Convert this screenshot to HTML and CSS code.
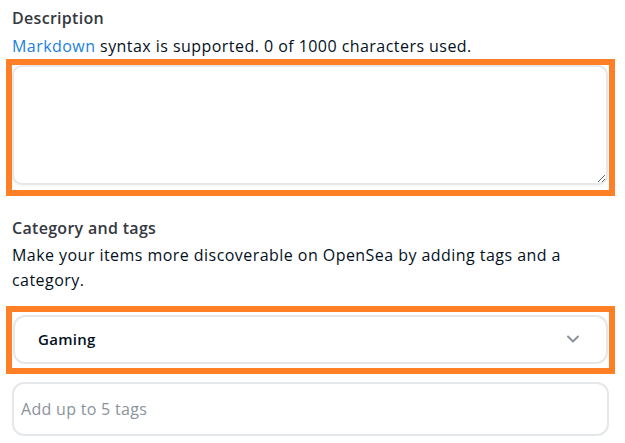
FILE: index.html
```html
<!DOCTYPE html>
<html>
<head>
<meta charset="utf-8">
<link rel="stylesheet" href="styles.css">
</head>
<body>
<div class="form">
  <div class="label label-desc">Description</div>
  <div class="hint hint-desc"><a class="link" href="#">Markdown</a> syntax is supported. 0 of 1000 characters used.</div>
  <div class="highlight highlight-area">
    <textarea class="textarea"></textarea>
  </div>
  <div class="label label-cat">Category and tags</div>
  <div class="hint hint-cat">Make your items more discoverable on OpenSea by adding tags and a category.</div>
  <div class="highlight highlight-select">
    <div class="select">
      <span class="select-value">Gaming</span>
      <svg class="chevron" width="14" height="8" viewBox="0 0 14 8"><polyline points="2,1.5 7,6.5 12,1.5" fill="none" stroke="#8a939b" stroke-width="2" stroke-linecap="round" stroke-linejoin="round"/></svg>
    </div>
  </div>
  <div class="tags">Add up to 5 tags</div>
</div>
</body>
</html>
```
FILE: styles.css
```css
html, body {
  margin: 0;
  padding: 0;
  background: #ffffff;
}
body {
  font-family: "Open Sans", "Liberation Sans", sans-serif;
  color: #04111d;
}
.form {
  display: flex;
  flex-direction: column;
  padding: 6px 16px 0 12px;
}
.label {
  font-size: 16px;
  font-weight: 600;
  line-height: 24px;
  letter-spacing: 0.3px;
  color: #353840;
}
.label-cat {
  margin-top: 20px;
}
.hint {
  font-size: 16px;
  line-height: 24px;
  letter-spacing: 0.45px;
  color: #04111d;
}
.hint-desc {
  margin-top: 4px;
}
.hint-cat {
  margin-top: 3px;
  line-height: 25px;
}
.link {
  color: #2081e2;
  text-decoration: none;
}
.highlight {
  border: 6px solid #ff7f27;
  margin: 0 -6px 0 -6px;
}
.highlight-area {
  margin-top: 1px;
  padding: 0 0 5px 0;
  display: flex;
}
.textarea {
  flex: 1;
  height: 120px;
  box-sizing: border-box;
  border: 2px solid #e5e8eb;
  border-radius: 10px;
  box-shadow: 0 1px 3px rgba(0,0,0,0.06);
  resize: vertical;
  margin: 0 1px 0 0;
  font-family: inherit;
  font-size: 16px;
  padding: 12px;
  outline: none;
}
.highlight-select {
  margin-top: 13px;
  padding: 3px 1px 4px 1px;
}
.select {
  height: 49px;
  box-sizing: border-box;
  border: 2px solid #e5e8eb;
  border-radius: 12px;
  display: flex;
  align-items: center;
  justify-content: space-between;
  padding: 0 26px 0 23px;
}
.select-value {
  font-size: 15px;
  font-weight: 600;
  letter-spacing: 0.3px;
  line-height: 20px;
  margin-top: -2px;
  color: #04111d;
}
.chevron {
  display: block;
  margin-top: -1px;
}
.tags {
  margin-top: 8px;
  height: 54px;
  box-sizing: border-box;
  border: 2px solid #e5e8eb;
  border-radius: 12px;
  display: flex;
  align-items: center;
  padding: 0 0 0 7px;
  font-size: 16px;
  letter-spacing: 0.3px;
  color: #8a939b;
}
```
